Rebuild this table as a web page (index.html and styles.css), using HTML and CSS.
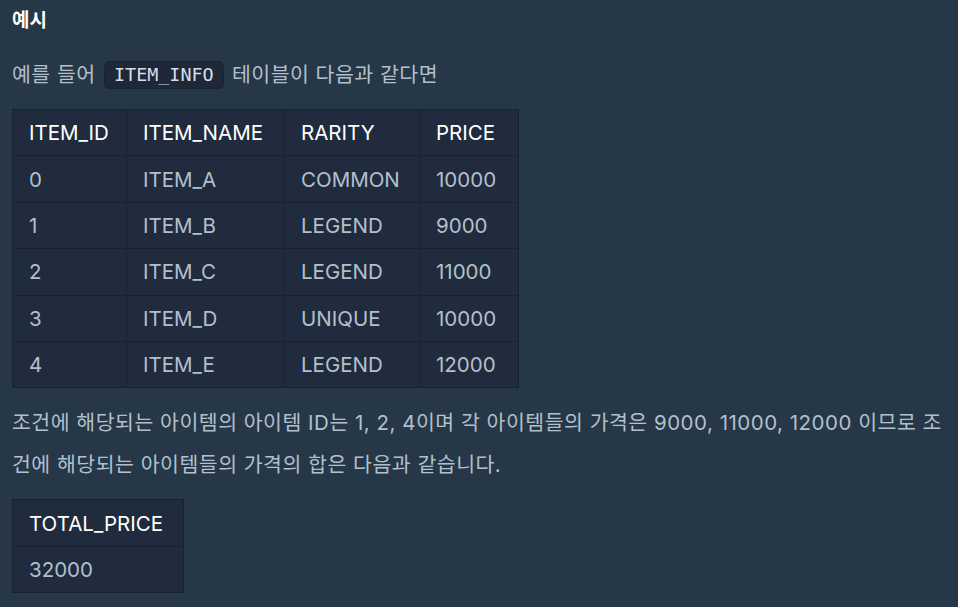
FILE: index.html
```html
<!DOCTYPE html>
<html lang="ko">
<head>
<meta charset="utf-8">
<link rel="stylesheet" href="styles.css">
</head>
<body>
<div class="content">
  <h5 class="title">예시</h5>
  <p class="para">예를 들어 <code class="code">ITEM_INFO</code> 테이블이 다음과 같다면</p>
  <table class="tbl tbl-items">
    <colgroup>
      <col class="c1"><col class="c2"><col class="c3"><col class="c4">
    </colgroup>
    <thead>
      <tr><th>ITEM_ID</th><th>ITEM_NAME</th><th>RARITY</th><th>PRICE</th></tr>
    </thead>
    <tbody>
      <tr><td>0</td><td>ITEM_A</td><td>COMMON</td><td>10000</td></tr>
      <tr><td>1</td><td>ITEM_B</td><td>LEGEND</td><td>9000</td></tr>
      <tr><td>2</td><td>ITEM_C</td><td>LEGEND</td><td>11000</td></tr>
      <tr><td>3</td><td>ITEM_D</td><td>UNIQUE</td><td>10000</td></tr>
      <tr><td>4</td><td>ITEM_E</td><td>LEGEND</td><td>12000</td></tr>
    </tbody>
  </table>
  <p class="para">조건에 해당되는 아이템의 아이템 ID는 1, 2, 4이며 각 아이템들의 가격은 9000, 11000, 12000 이므로 조건에 해당되는 아이템들의 가격의 합은 다음과 같습니다.</p>
  <table class="tbl tbl-total">
    <thead>
      <tr><th>TOTAL_PRICE</th></tr>
    </thead>
    <tbody>
      <tr><td>32000</td></tr>
    </tbody>
  </table>
</div>
</body>
</html>
```
FILE: styles.css
```css
html, body {
  margin: 0;
  padding: 0;
  background: #263747;
}
body {
  font-family: Inter, "Noto Sans CJK KR", sans-serif;
  color: #b2c0cc;
}
.content {
  padding: 0 8px 0 12px;
  word-break: break-all;
}
.title {
  margin: 0 0 12px 0;
  font-size: 19px;
  line-height: 42px;
  font-weight: 700;
  color: #ffffff;
}
.para {
  margin: 0 0 13px 0;
  font-size: 20.5px;
  letter-spacing: 0.5px;
  line-height: 42px;
  color: #b2c0cc;
}
.code {
  display: inline-block;
  font-family: "DejaVu Sans Mono", "Liberation Mono", monospace;
  font-size: 18.4px;
  letter-spacing: 0;
  line-height: 26px;
  padding: 0 9px;
  margin: 0 2px;
  background: #1e2838;
  border: 1px solid #1a2433;
  border-radius: 5px;
  color: #d5dee7;
  vertical-align: 1px;
}
.tbl {
  border-collapse: collapse;
  table-layout: fixed;
  background: #202b3d;
  margin: 0 0 14px 0;
  font-size: 20.5px;
}
.tbl th, .tbl td {
  border: 1px solid #172130;
  height: 46.4px;
  padding: 0 16px;
  text-align: left;
  white-space: nowrap;
  box-sizing: border-box;
}
.tbl th {
  color: #ffffff;
  font-weight: 400;
}
.tbl td {
  color: #b2c0cc;
}
.tbl-items { width: 506px; }
.c1 { width: 114px; }
.c2 { width: 158px; }
.c3 { width: 135px; }
.c4 { width: 99px; }
.tbl-total { width: 172px; }
```
